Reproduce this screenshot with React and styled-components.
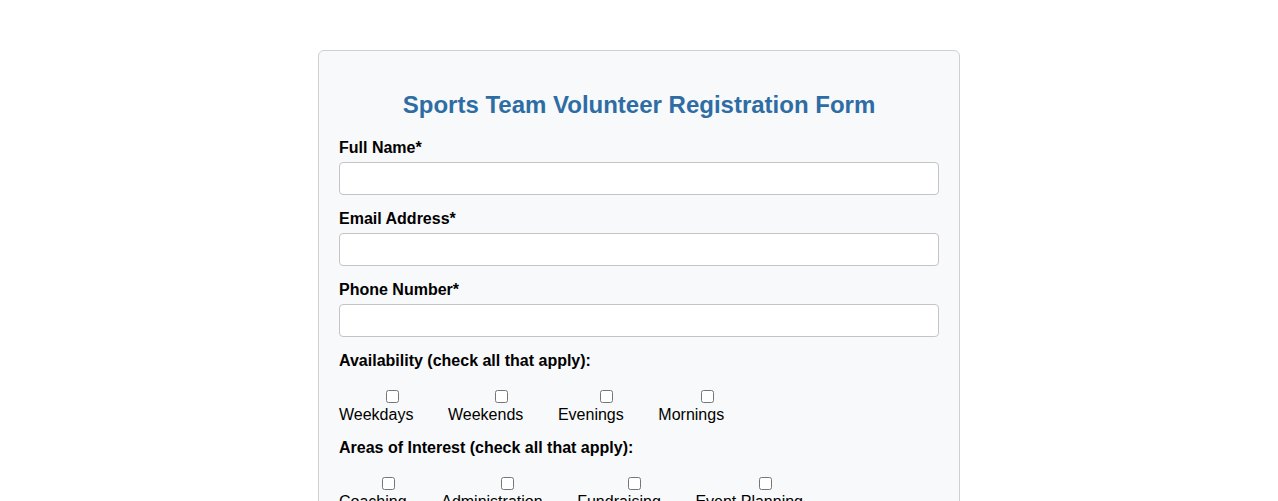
import React from 'react';
import styled, { createGlobalStyle } from 'styled-components';

const GlobalStyle = createGlobalStyle`
  body {
    margin: 0;
    background: #ffffff;
    font-family: Arial, "Liberation Sans", sans-serif;
  }
`;

const Container = styled.div`
  width: 600px;
  margin: 50px auto 0;
  padding: 20px;
  background: #f8f9fa;
  border: 1px solid #d0d0d0;
  border-radius: 6px;
`;

const Title = styled.h2`
  margin: 20px 0 20px;
  text-align: center;
  color: #2e6da4;
  font-size: 24px;
  line-height: 28px;
`;

const Label = styled.label`
  display: block;
  font-weight: bold;
  font-size: 16px;
  line-height: 18px;
  color: #000;
  margin-bottom: 5px;
`;

const TextInput = styled.input`
  display: block;
  box-sizing: border-box;
  width: 100%;
  height: 33px;
  padding: 8px;
  margin: 0 0 15px;
  border: 1px solid #c4c4c4;
  border-radius: 4px;
  background: #fff;
  font-size: 14px;
`;

const CheckGroup = styled.div`
  display: flex;
  gap: 2.6px;
  margin: 20px 0 15px;
`;

const CheckItem = styled.label`
  display: flex;
  flex-direction: column;
  padding-right: 32px;
  font-size: 16px;
  line-height: 18px;
  color: #000;
`;

const Box = styled.input`
  align-self: center;
  width: 13px;
  height: 13px;
  margin: 0 0 3px 32px;
`;

const Field = ({ label, type }) => (
  <>
    <Label>{label}*</Label>
    <TextInput type={type} />
  </>
);

const Checks = ({ title, items }) => (
  <>
    <Label>{title}</Label>
    <CheckGroup>
      {items.map((item) => (
        <CheckItem key={item}>
          <Box type="checkbox" />
          <span>{item}</span>
        </CheckItem>
      ))}
    </CheckGroup>
  </>
);

export default function App() {
  return (
    <>
      <GlobalStyle />
      <Container>
        <Title>Sports Team Volunteer Registration Form</Title>
        <form>
          <Field label="Full Name" type="text" />
          <Field label="Email Address" type="email" />
          <Field label="Phone Number" type="tel" />
          <Checks
            title="Availability (check all that apply):"
            items={['Weekdays', 'Weekends', 'Evenings', 'Mornings']}
          />
          <Checks
            title="Areas of Interest (check all that apply):"
            items={['Coaching', 'Administration', 'Fundraising', 'Event Planning']}
          />
        </form>
      </Container>
    </>
  );
}
